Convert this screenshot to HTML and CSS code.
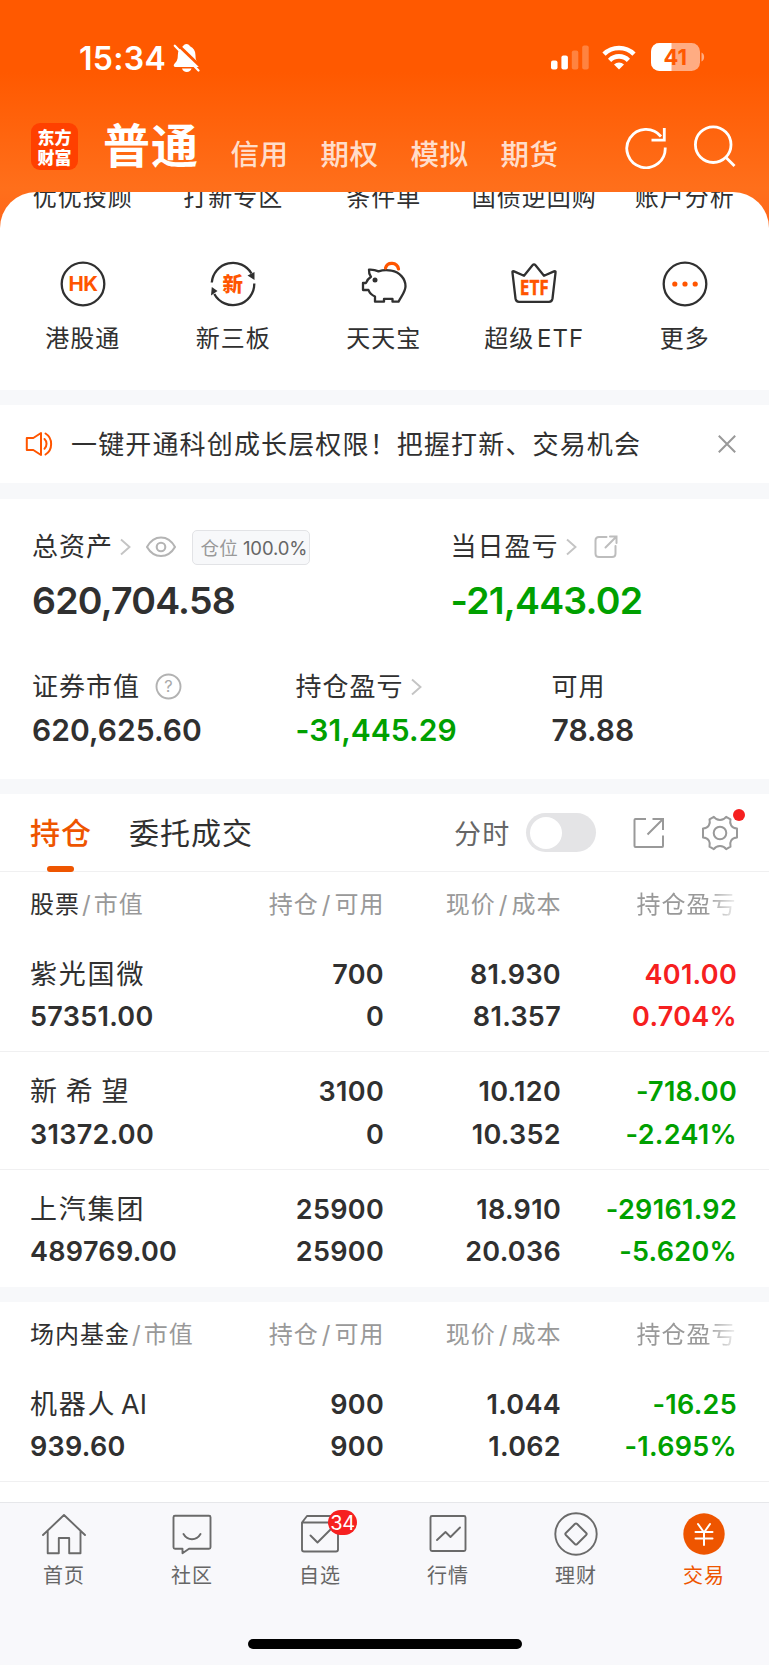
FILE: index.html
```html
<!DOCTYPE html>
<html lang="zh-CN">
<head>
<meta charset="utf-8">
<title>交易</title>
<link rel="stylesheet" href="styles.css">
</head>
<body>
<div class="app">
  <header class="top">
    <div class="status">
      <span class="clock">15:34</span>
      <svg class="bell" width="28" height="30" viewBox="0 0 28 30"><path d="M13.500 1c1.800 0 3 1 3.500 2.300C20.500 4.800 22.500 8 22.500 12.500c0 5 1.500 6.500 3.500 8.500 1.200 1.300.5 3-1.200 3H2.500C.7 24 .2 22.300 1.300 21c1.700-2 3.500-3.500 3.500-8.500C4.800 8 6.500 4.800 10 3.300 10.500 2 11.700 1 13.500 1z" fill="#fff"/><path d="M9 25.500h9.500c-.6 2.100-2.400 3.500-4.700 3.500S9.600 27.600 9 25.500z" fill="#fff"/><path d="M3.500.500L28 24" stroke="#ff5900" stroke-width="3"/><path d="M1.800 2.800L25.500 27.500" stroke="#fff" stroke-width="2.300" stroke-linecap="round"/></svg>
      <svg class="signal" width="38" height="25" viewBox="0 0 38 25" fill="#fff"><rect x="0" y="15.500" width="6.500" height="9" rx="2"/><rect x="10.400" y="10.500" width="6.500" height="14" rx="2"/><g opacity=".25"><rect x="20.800" y="5.500" width="6.500" height="19" rx="2"/><rect x="31.200" y=".5" width="6.500" height="24" rx="2"/></g></svg>
      <svg class="wifi" width="34" height="25" viewBox="0 0 34 25" fill="none" stroke="#fff" stroke-width="4.600"><path d="M2 9.200a21.400 21.400 0 0 1 30 0"/><path d="M7.600 15.300a13.300 13.300 0 0 1 18.800 0"/><path d="M17 24.500l-5-5.100a7.200 7.200 0 0 1 10 0z" fill="#fff" stroke="none"/></svg>
      <svg class="battery" width="54" height="28" viewBox="0 0 54 28"><clipPath id="cell"><rect width="49" height="28" rx="8.500"/></clipPath><g clip-path="url(#cell)"><rect width="49" height="28" fill="#ffac82"/><rect width="20.500" height="28" fill="#fff"/></g><path d="M50.500 9.500c3.500 1.500 3.500 7.500 0 9z" fill="#ffac82"/><text class="level" x="24.300" y="21.800">41</text></svg>
    </div>
    <nav class="markets">
      <div class="logo"><span>东方</span><span>财富</span></div>
      <b class="current">普通</b>
      <span class="mkt">信用</span><span class="mkt">期权</span><span class="mkt">模拟</span><span class="mkt">期货</span>
      <svg class="refresh" width="44" height="44" viewBox="0 0 44 44" fill="none" stroke="#fff" stroke-width="2.800"><path d="M41.200 22.500A19.200 19.200 0 1 1 37 11.500"/><path d="M40.300 3v12.200H27.500"/></svg>
      <svg class="search" width="44" height="44" viewBox="0 0 44 44" fill="none" stroke="#fff" stroke-width="2.800"><circle cx="20.200" cy="19.700" r="17.800"/><path d="M32.500 32l9 9"/></svg>
    </nav>
  </header>

  <section class="sheet">
    <div class="grid5 clipped"><span>优优投顾</span><span>打新专区</span><span>条件单</span><span>国债逆回购</span><span>账户分析</span></div>
    <div class="grid5 tools">
      <div class="tool"><svg width="48" height="48" viewBox="0 0 48 48"><circle class="ink" cx="24" cy="24" r="21.300"/><text class="mark hk" x="24" y="31.300">HK</text></svg><span>港股通</span></div>
      <div class="tool"><svg width="48" height="48" viewBox="0 0 48 48"><path class="ink" d="M2.800 22.500A21.300 21.300 0 0 1 42.500 13.500M45.300 23.500A21.300 21.300 0 0 1 5.300 34"/><path d="M38.500 15.500l7-3.500v8zM2 35.500l.8-8.500 5.700 4z" fill="#303030"/><text class="mark xin" x="23.700" y="31.500">新</text></svg><span>新三板</span></div>
      <div class="tool"><svg width="48" height="48" viewBox="0 0 48 48"><path class="ink" d="M9 9.700c3.500-.2 6.500.3 9.500 1.700 4-1.400 9-1.600 13-.7 8 1.600 14 7.700 14 15.500 0 5.500-4 9.500-7 15.500h-6v-2.800h-8.500v2.800h-9v-5.200c-3.500-1.500-5.500-3.500-6.500-6.500H3v-7h3c.8-2.500 2.500-4.500 5-6.200-1.500-2.100-2.300-4.500-2-7.100z"/><circle cx="15" cy="20" r="2.500" fill="#303030"/><path d="M25.500 8c2-6.500 11.500-6 13 1" fill="none" stroke="#ff5500" stroke-width="3.200" stroke-linecap="round"/></svg><span>天天宝</span></div>
      <div class="tool"><svg width="48" height="48" viewBox="0 0 48 48"><path class="ink" d="M2.500 12.800Q2 10.800 4 11.400L14 15.800 22.500 5.300Q24 3.600 25.500 5.300L34 15.800 44 11.400Q46 10.800 45.500 12.800L42.500 38.500Q42 41.800 39 41.800H9Q6 41.800 5.500 38.500z"/><text class="mark etf" x="24.300" y="34.900" textLength="29" lengthAdjust="spacingAndGlyphs">ETF</text></svg><span>超级 ETF</span></div>
      <div class="tool"><svg width="48" height="48" viewBox="0 0 48 48"><circle class="ink" cx="24" cy="24" r="21.300"/><g fill="#ff5500"><circle cx="13.800" cy="24" r="2.600"/><circle cx="24" cy="24" r="2.600"/><circle cx="34.200" cy="24" r="2.600"/></g></svg><span>更多</span></div>
    </div>
  </section>

  <section class="notice">
    <svg class="horn" width="28" height="26" viewBox="0 0 28 26" fill="none" stroke="#ff5500" stroke-width="2" stroke-linejoin="round" stroke-linecap="round"><path d="M1.800 7h6.500l7.700-5v22l-7.700-5H1.800z"/><path d="M19.500 8c2.700 2.500 2.700 7.200 0 9.700M20.500 2.500c7.500 4.500 7.500 16.500 0 21"/></svg>
    <span class="msg">一键开通科创成长层权限！把握打新、交易机会</span>
    <svg class="close" width="18" height="18" viewBox="0 0 18 18" stroke="#999" stroke-width="2"><path d="M.8.800l16.400 16.400M17.200.8L.8 17.200"/></svg>
  </section>

  <section class="assets">
    <div class="pair">
      <div class="asset">
        <div class="lab">总资产<svg class="chev" width="11" height="18" viewBox="0 0 11 18"><path d="M1 1.500L9.500 9 1 16.500"/></svg><svg class="eye" width="30" height="22" viewBox="0 0 30 22"><path d="M1 11C8-1.600 22-1.600 29 11 22 23 8 23 1 11z"/><circle cx="15" cy="11" r="4.300"/></svg><span class="tag">仓位<i>100.0%</i></span></div>
        <div class="big">620,704.58</div>
      </div>
      <div class="asset">
        <div class="lab">当日盈亏<svg class="chev" width="11" height="18" viewBox="0 0 11 18"><path d="M1 1.500L9.500 9 1 16.500"/></svg><svg class="share" width="24" height="24" viewBox="0 0 24 24"><path d="M12.500 2H5Q1.500 2 1.500 5.500v13Q1.500 22 5 22h13q3.500 0 3.500-3.500V11M16 1.500h6.500V8M22 2L11.500 12.500"/></svg></div>
        <div class="big down">-21,443.02</div>
      </div>
    </div>
    <div class="trio">
      <div><div class="lab">证券市值<svg class="help" width="27" height="27" viewBox="0 0 27 27"><circle cx="13.500" cy="13.500" r="12" fill="none" stroke="#b2b2b2" stroke-width="1.900"/><text x="13.500" y="19.300">?</text></svg></div><div class="mid">620,625.60</div></div>
      <div><div class="lab">持仓盈亏<svg class="chev" width="11" height="18" viewBox="0 0 11 18"><path d="M1 1.500L9.500 9 1 16.500"/></svg></div><div class="mid down">-31,445.29</div></div>
      <div><div class="lab">可用</div><div class="mid">78.88</div></div>
    </div>
  </section>

  <section class="tabs">
    <span class="tab on">持仓</span><span class="tab">委托成交</span>
    <span class="minute">分时</span><span class="toggle"></span>
    <svg class="export" width="32" height="32" viewBox="0 0 32 32" fill="none" stroke="#999" stroke-width="2"><path d="M13 2H2.500Q1.500 2 1.500 3v26q0 1 1 1H29q1 0 1-1V18.500M19.500 2H30v11M29.500 2.500L14.500 17.500"/></svg>
    <span class="gearbox"><svg width="38" height="38" viewBox="0 0 38 38" fill="none" stroke="#999" stroke-width="2" stroke-linejoin="round"><path d="M8.500 5.300l4.300-2.500c1.800 2.700 3.600 3.200 6.200 3.200s4.400-.5 6.200-3.200l4.300 2.500c-1.200 4.500.8 9 6.500 9.200v9c-5.700.2-7.700 4.700-6.500 9.200l-4.300 2.500C23.400 32.500 21.600 32 19 32s-4.400.5-6.200 3.200l-4.300-2.500c1.200-4.500-.8-9-6.500-9.200v-9c5.700-.2 7.700-4.700 6.500-9.200z"/><circle cx="19" cy="19" r="6.300"/></svg><i class="dot"></i></span>
  </section>

  <section class="table">
    <div class="thead"><span><b>股票</b><s>/</s>市值</span><span>持仓<s>/</s>可用</span><span>现价<s>/</s>成本</span><span class="fade">持仓盈亏</span></div>
    <div class="row"><div><em>紫光国微</em>57351.00</div><div>700<br>0</div><div>81.930<br>81.357</div><div class="up">401.00<br>0.704%</div></div>
    <div class="row"><div><em class="spaced">新 希 望</em>31372.00</div><div>3100<br>0</div><div>10.120<br>10.352</div><div class="down">-718.00<br>-2.241%</div></div>
    <div class="row last"><div><em>上汽集团</em>489769.00</div><div>25900<br>25900</div><div>18.910<br>20.036</div><div class="down">-29161.92<br>-5.620%</div></div>
  </section>
  <section class="table funds">
    <div class="thead"><span><b>场内基金</b><s>/</s>市值</span><span>持仓<s>/</s>可用</span><span>现价<s>/</s>成本</span><span class="fade">持仓盈亏</span></div>
    <div class="row"><div><em>机器人<span class="latin"> AI</span></em>939.60</div><div>900<br>900</div><div>1.044<br>1.062</div><div class="down">-16.25<br>-1.695%</div></div>
  </section>

  <footer class="dock">
    <nav class="items">
      <div class="item"><svg width="46" height="46" viewBox="0 0 46 46"><path d="M2 23L23 3l21 20M6.700 19v22.300H17.800V26h10.400v15.300h11.300V19"/></svg><span>首页</span></div>
      <div class="item"><svg width="46" height="46" viewBox="0 0 46 46"><path d="M6 3.800h34q1.500 0 1.500 1.500v30q0 1.500-1.500 1.500H20l-6.500 4.500v-4.500H6q-1.500 0-1.500-1.500v-30q0-1.500 1.500-1.500zM14.500 22c4 7 13 7 17 0"/></svg><span>社区</span></div>
      <div class="item"><svg width="46" height="46" viewBox="0 0 46 46"><path d="M5 10.500L10 4h26l5 6.500v27q0 2-2 2H7q-2 0-2-2zM5 10.500h36M13.500 23.500l7 7L35 16"/></svg><i class="count">34</i><span>自选</span></div>
      <div class="item"><svg width="46" height="46" viewBox="0 0 46 46"><rect x="5.500" y="4" width="35" height="35" rx="1.500"/><path d="M12 28l8.500-8 5 5L35 15.500"/></svg><span>行情</span></div>
      <div class="item"><svg width="46" height="46" viewBox="0 0 46 46"><circle cx="23" cy="22" r="20.700"/><path d="M21.800 12Q23 10.800 24.200 12l9 9q1 1 0 2l-9 9q-1.200 1.200-2.400 0l-9-9q-1-1 0-2z"/></svg><span>理财</span></div>
      <div class="item active"><svg width="46" height="46" viewBox="0 0 46 46"><circle class="coin" cx="23" cy="22" r="20.700"/><path class="yen" d="M17 12l6 8.500 6-8.500M14.500 20h17M14.500 26.500h17M23 20.500V33"/></svg><span>交易</span></div>
    </nav>
    <div class="home"></div>
  </footer>
</div>
</body>
</html>
```
FILE: styles.css
```css
* { box-sizing: border-box; }
body { margin: 0; background: #f7f8fa; }
.app {
  width: 769px; height: 1665px; overflow: hidden;
  display: flex; flex-direction: column;
  font-family: Inter, "Noto Sans CJK SC", sans-serif;
  color: #303030;
  background: #f7f8fa;
}
.app > * { flex: none; }
svg { display: block; flex: none; }
i, em { font-style: normal; }
.down { color: #00a000; }
.up { color: #f62020; }

/* header */
.top {
  height: 240px; margin-bottom: -48px;
  background: linear-gradient(#ff5900 0, #ff5900 72px, #ff6f1b 188px, #ff641a 240px);
  color: #fff;
}
.status { display: flex; height: 100px; padding-top: 43px; align-items: flex-start; }
.clock { margin-left: 79px; width: 94px; font-size: 32px; font-weight: 600; line-height: 32px; letter-spacing: .3px; }
.signal { margin: 2px 0 0 350px; }
.wifi { margin: 2px 0 0 13px; }
.battery { margin: 0 0 0 15px; }
.level { font: 700 22px Inter, sans-serif; fill: #ff5900; text-anchor: middle; }
.markets { display: flex; height: 92px; }
.logo {
  margin: 23px 25px 0 31px; width: 47px; height: 47px; border-radius: 9px; background: #ff4000;
  display: flex; flex-direction: column; align-items: center; justify-content: center;
  font: 900 17px/19.500px "Noto Sans CJK SC", sans-serif;
}
.current { font-size: 47px; line-height: 60px; margin-top: 16px; width: 127.500px; letter-spacing: 1px; font-weight: 600; }
.mkt { font-size: 28.500px; line-height: 40px; margin-top: 35px; width: 90px; letter-spacing: .5px; font-weight: 500; color: rgba(255,255,255,.8); }
.refresh { margin: 25px 0 0 33px; }
.search { margin: 25px 0 0 25px; }

/* shortcut sheet */
.sheet { height: 198px; background: #fff; border-radius: 36px 36px 0 0; overflow: hidden; }
.grid5 { display: grid; grid-template-columns: repeat(5, 150.500px); padding-left: 7.500px; text-align: center; font-size: 24px; letter-spacing: 1px; }
.clipped { height: 66px; line-height: 30px; }
.clipped span { margin-top: -9px; }
.tool { display: flex; flex-direction: column; align-items: center; line-height: 30px; }
.tools { margin-top: 2px; }
.tool span { margin-top: 16px; word-spacing: -5px; }
.ink { fill: none; stroke: #303030; stroke-width: 2.300; stroke-linejoin: round; }
.mark { fill: #ff5500; text-anchor: middle; letter-spacing: 0; }
.hk { font: 700 20.500px Inter, sans-serif; letter-spacing: -.5px; }
.xin { font: 900 20.500px "Noto Sans CJK SC", sans-serif; }
.etf { font: 700 20.500px "Open Sans", sans-serif; stroke: #ff5500; stroke-width: .4; }

/* notice */
.notice { margin-top: 15px; height: 78px; background: #fff; display: flex; align-items: center; padding: 0 33px 0 25px; }
.msg { margin: 2px 0 0 18px; flex: 1; font-size: 26px; letter-spacing: 1.150px; line-height: 40px; white-space: nowrap; }

/* assets */
.assets { margin-top: 16px; height: 280px; background: #fff; padding: 28px 0 0 32px; }
.pair { display: grid; grid-template-columns: 418.500px 1fr; }
.lab { display: flex; align-items: center; height: 40px; font-size: 26px; letter-spacing: 1px; line-height: 40px; }
.chev { margin-left: 7px; fill: none; stroke: #c4c4c4; stroke-width: 1.900; }
.eye { margin-left: 14.500px; fill: none; stroke: #b4b4b4; stroke-width: 2.100; }
.share { margin-left: 17px; fill: none; stroke: #bdbdbd; stroke-width: 2; stroke-linecap: round; }
.tag {
  margin: 0 0 0 16px; width: 118px; height: 35px; border: 1px solid #e2e3e6; border-radius: 5px; background: #f7f8fa;
  padding-left: 8px; font-size: 18.500px; line-height: 34px; color: #999; white-space: nowrap; letter-spacing: .2px;
}
.tag i { margin-left: 5px; color: #666; letter-spacing: -.1px; }
.big { font-size: 37.500px; font-weight: 600; line-height: 48px; margin-top: 9.500px; letter-spacing: -.8px; }
.trio { display: grid; grid-template-columns: 263.500px 256px 1fr; margin-top: 42px; }
.help { margin-left: 15px; }
.help text { font: 400 16.500px Inter, sans-serif; fill: #aaa; text-anchor: middle; letter-spacing: 0; }
.mid { font-size: 30px; font-weight: 600; line-height: 40px; margin-top: 3.500px; letter-spacing: .05px; }

/* holdings tabs */
.tabs { margin-top: 15px; height: 78px; background: #fff; border-bottom: 1px solid #f0f0f1; display: flex; align-items: center; padding-left: 30px; }
.tab { font-size: 30px; line-height: 79px; height: 77px; letter-spacing: 1px; margin-right: 37px; }
.tab.on { color: #ee5500; font-weight: 500; position: relative; }
.tab.on::after { content: ""; position: absolute; left: 17px; bottom: -1px; width: 27px; height: 6px; border-radius: 3px; background: #ee5500; }
.minute { margin-left: auto; font-size: 27px; letter-spacing: 1.200px; color: #666; width: 72px; }
.toggle { width: 70px; height: 39px; border-radius: 20px; background: #e4e4e6; padding: 3.500px; }
.toggle::before { content: ""; display: block; width: 32px; height: 32px; border-radius: 50%; background: #fff; }
.export { margin-left: 37px; }
.gearbox { margin: 0 30.500px 0 35.500px; position: relative; }
.dot { position: absolute; left: 32.500px; top: -5px; width: 12px; height: 12px; border-radius: 50%; background: #f62020; }

/* holdings tables */
.table { background: #fff; }
.thead, .row { display: grid; grid-template-columns: 200px 154px 177px 176px; padding-left: 30px; text-align: right; }
.thead { height: 62.500px; font-size: 24px; line-height: 65.500px; letter-spacing: 1px; color: #999; }
.thead > span { margin-right: -.5px; white-space: nowrap; }
.thead > :first-child, .row > :first-child { text-align: left; }
.thead b { font-weight: 400; color: #303030; }
.thead s { text-decoration: none; margin: 0 3px; }
.thead > :first-child s { margin: 0 2px; }
.thead .fade { padding-right: 1px; -webkit-mask-image: linear-gradient(90deg, #000 82%, transparent 102%); mask-image: linear-gradient(90deg, #000 82%, transparent 102%); }
.row { height: 117.500px; padding-top: 19px; border-bottom: 1px solid #f0f0f1; font-size: 27px; font-weight: 600; line-height: 42.500px; letter-spacing: .3px; }
.row em { display: block; font-weight: 400; letter-spacing: 1.800px; }
.row .spaced { word-spacing: -2.500px; }
.latin { letter-spacing: 0; word-spacing: -3px; }
.row.last { border: 0; height: 117px; }
.funds { margin-top: 15.500px; height: 200px; }

/* bottom bar */
.dock { margin-top: auto; height: 163px; background: #f8f8fb; border-top: 1px solid #e6e7ea; }
.items { display: grid; grid-template-columns: repeat(6, 128px); height: 136px; padding-top: 9px; }
.item { position: relative; display: flex; flex-direction: column; align-items: center; font-size: 20px; letter-spacing: 1px; color: #666; }
.item span { line-height: 26px; margin-top: 4.500px; }
.item svg { fill: none; stroke: #6a6a6a; stroke-width: 1.900; stroke-linejoin: round; stroke-linecap: round; }
.count { position: absolute; left: 72px; top: -2px; width: 29px; height: 25px; border-radius: 13px; background: #f62020; color: #fff; font-size: 20px; line-height: 26px; text-align: center; letter-spacing: -.5px; }
.item.active { color: #ee5500; }
.item .coin { fill: #ee5500; stroke: none; }
.item .yen { stroke: #fff; stroke-width: 2; }
.home { width: 274px; height: 10px; border-radius: 5px; background: #000; margin: 0 auto; }
```
